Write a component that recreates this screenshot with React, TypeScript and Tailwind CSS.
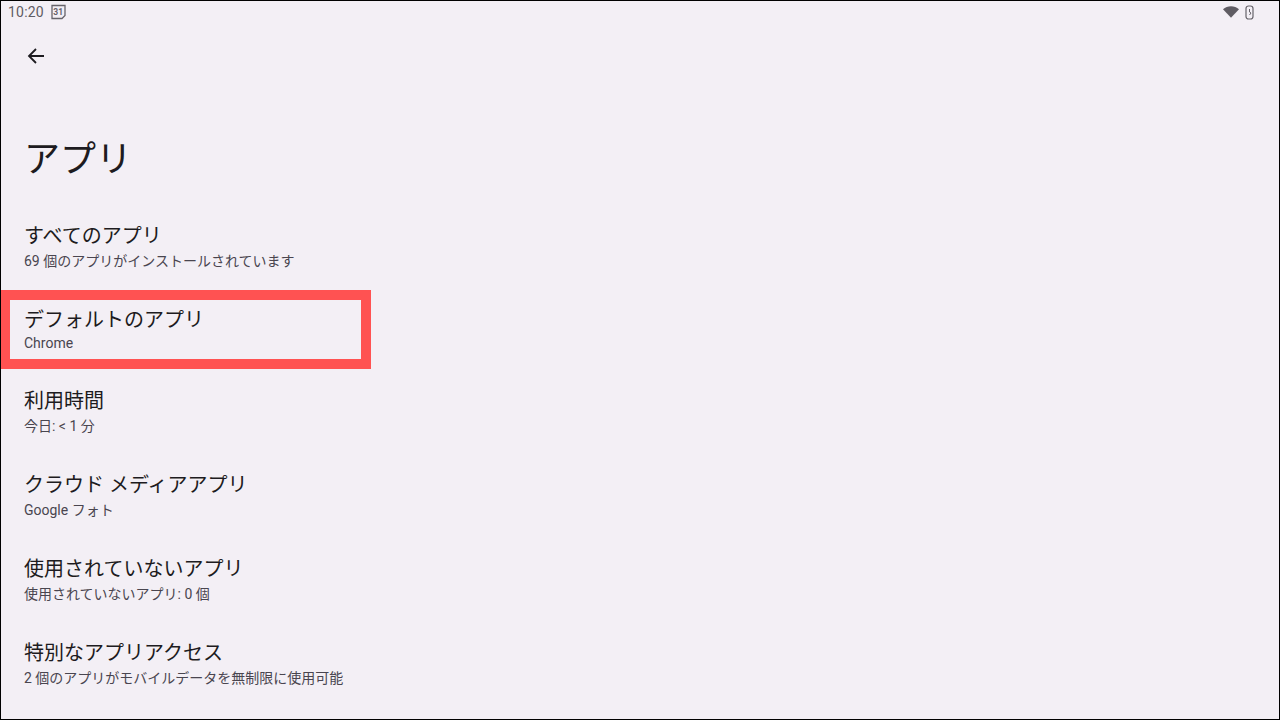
import React from "react";

const rows = [
  { title: "すべてのアプリ", sub: "69 個のアプリがインストールされています", h: "h-[84px]", gap: "mt-0" },
  { title: "デフォルトのアプリ", sub: "Chrome", h: "h-[81px]", gap: "mt-[-2px]" },
  { title: "利用時間", sub: "今日: < 1 分", h: "h-[84px]", gap: "mt-0" },
  { title: "クラウド メディアアプリ", sub: "Google フォト", h: "h-[84px]", gap: "mt-0" },
  { title: "使用されていないアプリ", sub: "使用されていないアプリ: 0 個", h: "h-[84px]", gap: "mt-0" },
  { title: "特別なアプリアクセス", sub: "2 個のアプリがモバイルデータを無制限に使用可能", h: "h-[84px]", gap: "mt-0" },
];

const font = "font-['Roboto','Noto_Sans_CJK_JP',sans-serif]";

export default function App() {
  return (
    <div className={`relative w-[1280px] h-[720px] overflow-hidden bg-[#f3eff5] border border-black ${font}`}>
      {/* status bar */}
      <div className="flex items-center justify-between h-[23px] pl-[7px] pr-[25px] text-[#5f5c63]">
        <div className="flex items-center gap-[7px]">
          <span className="text-[14px] leading-[23px] tracking-[0.2px]">10:20</span>
          <svg width="15" height="16" viewBox="0 0 15 16" fill="none" className="mt-[-2px]">
            <path d="M1 1.5h13v10l-3 3H1z" stroke="#66636a" strokeWidth="1.3" />
            <text x="7.2" y="10.5" textAnchor="middle" fontSize="8.5" fontWeight="700" fill="#66636a">31</text>
          </svg>
        </div>
        <div className="flex items-center gap-[6px]">
          <svg width="16" height="12" viewBox="0 0 16 12" className="mt-[-1px]">
            <path d="M0 3.2C2.2 1.3 5 0.3 8 0.3s5.8 1 8 2.9L8 11.8z" fill="#5f5c63" />
          </svg>
          <svg width="9" height="15" viewBox="0 0 9 15" fill="none">
            <rect x="1" y="1" width="7" height="13" rx="2.5" stroke="#66636a" strokeWidth="1.2" />
            <path d="M4.5 4v3l1.5 1-1.5 2" stroke="#66636a" strokeWidth="1" />
          </svg>
        </div>
      </div>

      {/* back button */}
      <div className="pl-[25px] pt-[22px]">
        <svg width="20" height="20" viewBox="0 0 20 20" fill="none" stroke="#1d1b20" strokeWidth="1.8">
          <path d="M18 10H3.5M10 3l-7 7 7 7" />
        </svg>
      </div>

      <h1 className="pl-[23px] mt-[67px] text-[36px] leading-[54px] font-normal text-[#1d1b20]">アプリ</h1>

      <div className="mt-[20px]">
        {rows.map((row) => (
          <div key={row.title} className={`${row.h} pl-[23px] pt-[14px]`}>
            <div className="text-[20px] leading-[30px] text-[#1d1b20]">{row.title}</div>
            <div className={`text-[14px] leading-[20px] text-[#49454f] ${row.gap}`}>{row.sub}</div>
          </div>
        ))}
      </div>

      {/* highlight frame */}
      <div className="absolute left-[-1px] top-[289px] w-[371px] h-[79px] border-[10px] border-[#ff5252]" />
    </div>
  );
}
